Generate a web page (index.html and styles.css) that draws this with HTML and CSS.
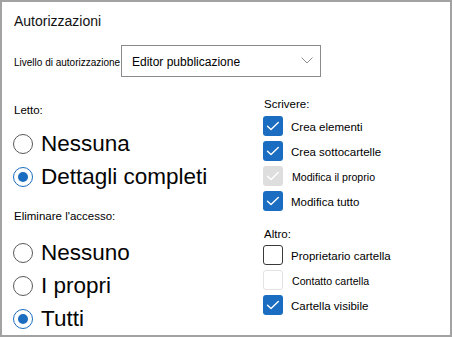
FILE: index.html
```html
<!DOCTYPE html>
<html lang="it">
<head>
<meta charset="utf-8">
<title>Autorizzazioni</title>
<link rel="stylesheet" href="styles.css">
</head>
<body>
<div class="panel">
  <div class="title">Autorizzazioni</div>
  <div class="level-row">
    <span class="level-label">Livello di autorizzazione</span>
    <div class="select">
      <span class="select-text">Editor pubblicazione</span>
      <svg class="chev" width="12" height="7" viewBox="0 0 12 7"><path d="M0.5 0.5 L6 6 L11.5 0.5" fill="none" stroke="#8f8f8f" stroke-width="1"/></svg>
    </div>
  </div>
  <div class="cols">
    <div class="col-left">
      <div class="group-label letto">Letto:</div>
      <div class="radio first"><span class="circle"></span><span class="rtext">Nessuna</span></div>
      <div class="radio"><span class="circle on"></span><span class="rtext">Dettagli completi</span></div>
      <div class="group-label elim">Eliminare l'accesso:</div>
      <div class="radio first"><span class="circle"></span><span class="rtext">Nessuno</span></div>
      <div class="radio"><span class="circle"></span><span class="rtext">I propri</span></div>
      <div class="radio"><span class="circle on"></span><span class="rtext">Tutti</span></div>
    </div>
    <div class="col-right">
      <div class="group-label">Scrivere:</div>
      <div class="checks">
        <div class="check"><span class="box on"><svg viewBox="0 0 20 20"><path d="M4.5 10.2 L8 13.6 L15.3 6.4"/></svg></span><span class="ctext">Crea elementi</span></div>
        <div class="check"><span class="box on"><svg viewBox="0 0 20 20"><path d="M4.5 10.2 L8 13.6 L15.3 6.4"/></svg></span><span class="ctext">Crea sottocartelle</span></div>
        <div class="check"><span class="box dis-on"><svg viewBox="0 0 20 20"><path d="M4.5 10.2 L8 13.6 L15.3 6.4"/></svg></span><span class="ctext small">Modifica il proprio</span></div>
        <div class="check"><span class="box on"><svg viewBox="0 0 20 20"><path d="M4.5 10.2 L8 13.6 L15.3 6.4"/></svg></span><span class="ctext">Modifica tutto</span></div>
      </div>
      <div class="group-label altro">Altro:</div>
      <div class="checks">
        <div class="check"><span class="box off"></span><span class="ctext">Proprietario cartella</span></div>
        <div class="check"><span class="box dis-off"></span><span class="ctext small">Contatto cartella</span></div>
        <div class="check"><span class="box on"><svg viewBox="0 0 20 20"><path d="M4.5 10.2 L8 13.6 L15.3 6.4"/></svg></span><span class="ctext">Cartella visibile</span></div>
      </div>
    </div>
  </div>
</div>
</body>
</html>
```

FILE: styles.css
```css
* { box-sizing: border-box; }
html, body { margin: 0; padding: 0; background: #fff; }
body { font-family: "Liberation Sans", Arial, sans-serif; color: #000; }

.panel {
  width: 452px;
  height: 337px;
  border: 2px solid #a2a2a2;
  padding: 11px 0 0 11px;
  overflow: hidden;
}

.title {
  font-size: 14px;
  line-height: 16px;
  margin-left: 1px;
  color: #111;
}

.level-row {
  display: flex;
  align-items: center;
  margin-top: 16px;
  height: 32px;
}
.level-label {
  flex: 0 0 108px;
  font-size: 10px;
  white-space: nowrap;
  padding-left: 1px;
  padding-top: 2px;
}
.select {
  width: 200px;
  height: 32px;
  border: 1px solid #8a8a8a;
  display: flex;
  align-items: center;
  justify-content: space-between;
  padding: 1px 7px 0 10px;
}
.select-text { font-size: 12px; }
.chev { display: block; margin-top: -2px; }

.cols {
  display: grid;
  grid-template-columns: 250px 1fr;
  margin-top: 20px;
}

.group-label {
  font-size: 11.5px;
  line-height: 14px;
  margin-left: 1px;
}
.col-left { padding-top: 6px; }
.radio {
  display: flex;
  align-items: center;
  gap: 8px;
  height: 33px;
}
.radio.first { margin-top: 10px; }
.group-label.elim { margin-top: 16px; }
.col-left .group-label.elim + .radio.first { margin-top: 13px; }

.circle {
  width: 20px;
  height: 20px;
  border-radius: 50%;
  border: 1px solid #5a5a5a;
  display: flex;
  align-items: center;
  justify-content: center;
  flex: none;
}
.circle.on { border-color: #1a6dc0; }
.circle.on::after {
  content: "";
  width: 10px;
  height: 10px;
  border-radius: 50%;
  background: #1a6dc0;
}
.rtext {
  font-size: 22.5px;
  line-height: 33px;
  color: #050505;
}

.checks {
  display: flex;
  flex-direction: column;
  gap: 5px;
  margin-top: 5px;
}
.group-label.altro { margin-top: 16px; }
.altro + .checks { margin-top: 4px; }

.check {
  display: flex;
  align-items: center;
  gap: 8px;
  height: 20px;
}
.box {
  width: 20px;
  height: 20px;
  border-radius: 3px;
  flex: none;
  display: block;
}
.box svg { display: block; width: 20px; height: 20px; }
.box path { fill: none; stroke: #fff; stroke-width: 1.4; stroke-linecap: round; stroke-linejoin: round; }
.box.on { background: #1a6dc0; }
.box.dis-on { background: #dedede; }
.box.off { border: 1px solid #3a3a3a; }
.box.dis-off { border: 1px solid #e2e2e2; }

.ctext {
  font-size: 11.5px;
  line-height: 14px;
  padding-top: 2px;
}
.ctext.small { font-size: 10.6px; margin-left: 1px; }
```
